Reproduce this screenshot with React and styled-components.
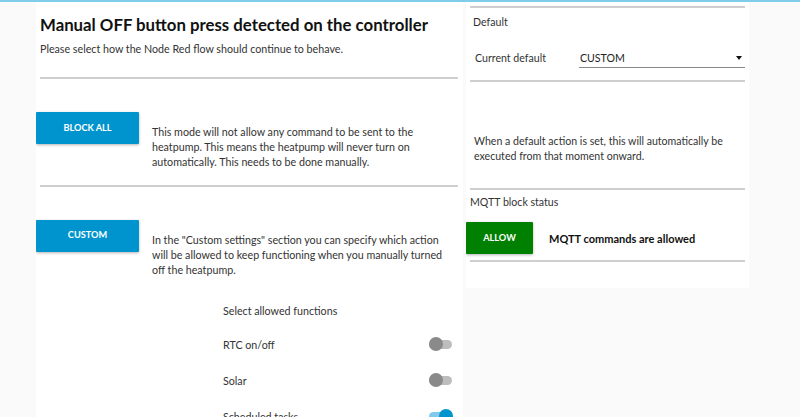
import React from "react";
import styled, { createGlobalStyle } from "styled-components";

const Global = createGlobalStyle`
  html, body { margin: 0; padding: 0; background: #fafafa; }
  body { font-family: Lato, "Open Sans", sans-serif; color: #333; overflow: hidden; }
  * { box-sizing: border-box; }
`;

const TopBar = styled.div`
  height: 2px;
  background: #7fcdea;
`;

const Main = styled.div`
  display: flex;
  align-items: flex-start;
  gap: 3px;
  padding-left: 36px;
`;

const Card = styled.div`
  background: #fff;
  width: ${(p) => p.$w}px;
  height: ${(p) => p.$h}px;
  padding: ${(p) => p.$pad};
  overflow: hidden;
`;

const Title = styled.h1`
  margin: 0;
  padding-top: 13px;
  font-size: 16.8px;
  line-height: 20px;
  font-weight: 700;
  color: #111;
  white-space: nowrap;
`;

const Sub = styled.p`
  margin: 6px 0 0;
  font-size: 10.7px;
  line-height: 15px;
  color: #333;
`;

const Divider = styled.div`
  height: 2px;
  background: #cfcfcf;
  margin-top: ${(p) => p.$mt || 0}px;
`;

const ModeRow = styled.div`
  display: flex;
  align-items: flex-start;
  height: ${(p) => p.$h}px;
  padding-top: ${(p) => p.$pt}px;
  margin-left: -4px;
`;

const Btn = styled.div`
  width: ${(p) => p.$w}px;
  height: 32px;
  flex: none;
  background: ${(p) => p.$bg};
  color: #fff;
  font-size: 9.2px;
  font-weight: 700;
  display: flex;
  align-items: center;
  justify-content: center;
  padding-bottom: ${(p) => p.$pb || 0}px;
  box-shadow: 0 1px 3px rgba(0,0,0,0.3);
  border-radius: 1px;
`;

const Desc = styled.p`
  margin: 0;
  margin-top: ${(p) => p.$mt}px;
  margin-left: 13px;
  width: 300px;
  font-size: 10.7px;
  line-height: 15px;
  color: #333;
`;

const Functions = styled.div`
  padding-left: 183px;
  padding-right: 6px;
  display: flex;
  flex-direction: column;
`;

const FnHead = styled.div`
  font-size: 10.7px;
  line-height: 15px;
  height: 33px;
  padding-top: 10px;
  color: #333;
`;

const FnRow = styled.div`
  height: 36px;
  display: flex;
  align-items: center;
  justify-content: space-between;
  font-size: 10.7px;
  color: #333;
`;

const Track = styled.div`
  position: relative;
  width: 23px;
  height: 9px;
  border-radius: 5px;
  background: ${(p) => (p.$on ? "#80c9ea" : "#bdbdbd")};
`;

const Thumb = styled.div`
  position: absolute;
  top: -3px;
  left: ${(p) => (p.$on ? "10px" : "0")};
  width: 14px;
  height: 14px;
  border-radius: 50%;
  background: ${(p) => (p.$on ? "#0094ce" : "#8a8a8a")};
`;

const Label = styled.div`
  font-size: 10.6px;
  line-height: 15px;
  color: #333;
  padding: ${(p) => p.$pad};
`;

const SelectRow = styled.div`
  display: flex;
  align-items: center;
  height: 50px;
  padding: 6px 0 0 5px;
`;

const SelLabel = styled.div`
  width: 104px;
  font-size: 10.6px;
  color: #333;
`;

const Select = styled.div`
  flex: 1;
  height: 20px;
  display: flex;
  align-items: center;
  justify-content: space-between;
  border-bottom: 1px solid #888;
  font-size: 10.6px;
  color: #222;
  padding: 0 3px 0 1px;
`;

const Caret = styled.span`
  width: 0;
  height: 0;
  border-left: 3.5px solid transparent;
  border-right: 3.5px solid transparent;
  border-top: 4px solid #111;
`;

const StatusRow = styled.div`
  display: flex;
  align-items: center;
  height: 34px;
  margin: 11px 0 0 -4px;
  gap: 16px;
`;

const Strong = styled.div`
  font-size: 11px;
  font-weight: 700;
  color: #111;
`;

function Toggle({ on }) {
  return (
    <Track $on={on}>
      <Thumb $on={on} />
    </Track>
  );
}

export default function App() {
  return (
    <>
      <Global />
      <TopBar />
      <Main>
        <Card $w={427} $pad="0 5px 0 4px" $h={415}>
          <Title>Manual OFF button press detected on the controller</Title>
          <Sub>Please select how the Node Red flow should continue to behave.</Sub>
          <Divider $mt={21} />
          <ModeRow $h={106} $pt={33}>
            <Btn $w={103} $bg="#0094ce" $pb={2}>BLOCK ALL</Btn>
            <Desc $mt={12}>
              This mode will not allow any command to be sent to the heatpump. This means the heatpump will never turn on automatically. This needs to be done manually.
            </Desc>
          </ModeRow>
          <Divider />
          <ModeRow $h={106} $pt={33}>
            <Btn $w={103} $bg="#0094ce" $pb={4}>CUSTOM</Btn>
            <Desc $mt={12}>
              In the "Custom settings" section you can specify which action will be allowed to keep functioning when you manually turned off the heatpump.
            </Desc>
          </ModeRow>
          <Functions>
            <FnHead>Select allowed functions</FnHead>
            <FnRow>RTC on/off<Toggle /></FnRow>
            <FnRow>Solar<Toggle /></FnRow>
            <FnRow>Scheduled tasks<Toggle on /></FnRow>
          </Functions>
        </Card>
        <Card $w={283} $pad="4px 4px 0 4px" $h={286}>
          <Divider $mt={0} />
          <Label $pad="7px 0 0 3px">Default</Label>
          <SelectRow>
            <SelLabel>Current default</SelLabel>
            <Select>CUSTOM<Caret /></Select>
          </SelectRow>
          <Divider />
          <Label $pad="52px 0 0 4px">When a default action is set, this will automatically be executed from that moment onward.</Label>
          <Divider $mt={24} />
          <Label $pad="5px 0 0 0">MQTT block status</Label>
          <StatusRow>
            <Btn $w={67} $bg="#008000" $pb={2}>ALLOW</Btn>
            <Strong>MQTT commands are allowed</Strong>
          </StatusRow>
          <Divider $mt={5} />
        </Card>
      </Main>
    </>
  );
}
